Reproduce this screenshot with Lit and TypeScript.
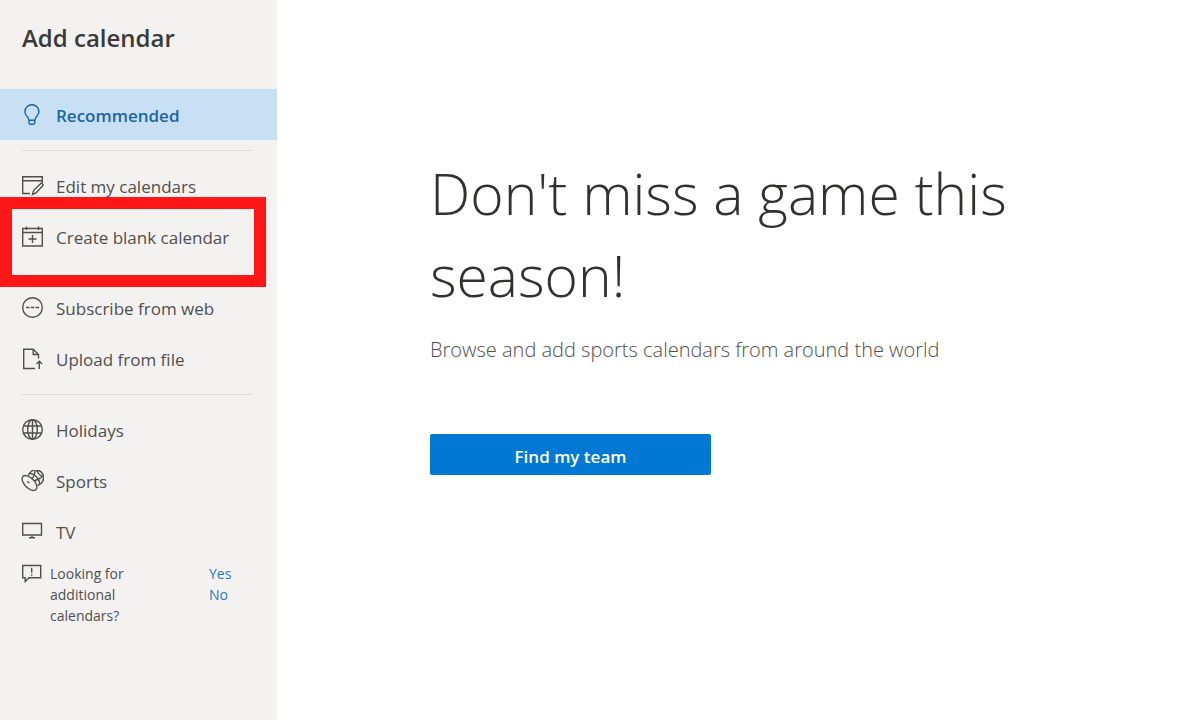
import { LitElement, html, css, svg, nothing } from "lit";
import { customElement, state } from "lit/decorators.js";

interface NavItem {
  id: string;
  label: string;
  highlighted?: boolean;
}

const icons: Record<string, unknown> = {
  recommended: svg`<path d="M8 16.200c0-2.900-4.100-4.300-4.100-8.500a7 7 0 0 1 14 0c0 4.200-4.100 5.600-4.100 8.500z M8 16.200v2.600a1.500 1.500 0 0 0 1.500 1.500h2.800a1.500 1.500 0 0 0 1.500-1.500v-2.600"/>`,
  edit: svg`<path d="M9 18.500H1.700V1.700h19.600v6M1.700 5.800h19.600M11.500 19.500l1.200-4.200 6.600-6.400a1.500 1.500 0 0 1 2.200 2.200l-6.500 6.800z"/>`,
  create: svg`<path d="M1.700 2.500h19.600v17.500H1.700zM1.700 6.500h19.600M5.500.5v3.500M17.500.5v3.500M11.500 9v8M7.500 13h8"/>`,
  subscribe: svg`<circle cx="11.500" cy="10.500" r="9.800"/><path d="M5 10.500h3.500M9.800 10.500h3.500M14.600 10.500h3.500"/>`,
  upload: svg`<path d="M14 20.500H2.700V1.200h9.500l5.300 5.300v4M12.200 1.200v5.300h5.300M18.300 21v-7.500M15.500 16l2.800-2.800 2.800 2.800"/>`,
  holidays: svg`<circle cx="11.500" cy="10.500" r="9.800"/><ellipse cx="11.500" cy="10.500" rx="4.800" ry="9.800"/><path d="M11.500.7v19.600M2.800 7h17.400M2.800 14h17.400"/>`,
  sports: svg`<path d="M7.300 5.600A7.800 7.800 0 1 1 16.500 15.300M9 3.300c4.500.7 9.300 5.200 9.800 10.500M14 .8c-.3 4.500-1.500 7-4 8M21.500 6.500c-3 2.500-5.500 3.500-8.500 4.500M15.500.8c1.500 3 3.500 4.500 6 5.500"/><ellipse cx="8.500" cy="13" rx="9.200" ry="5" transform="rotate(45 8.500 13)"/><path d="M6 11.500l2.500 1.500"/>`,
  tv: svg`<path d="M1.700 2.500h18.800v11.500H1.700zM11 14v2.500M8 16.700h6"/>`,
  feedback: svg`<path d="M1.700 2.500h18v12.300H8l-3.800 3.700v-3.700H1.700zM10.700 4.800v5M10.700 11.200v1.500"/>`,
};

const groups: NavItem[][] = [
  [{ id: "recommended", label: "Recommended" }],
  [
    { id: "edit", label: "Edit my calendars" },
    { id: "create", label: "Create blank calendar", highlighted: true },
  ],
  [
    { id: "subscribe", label: "Subscribe from web" },
    { id: "upload", label: "Upload from file" },
  ],
  [
    { id: "holidays", label: "Holidays" },
    { id: "sports", label: "Sports" },
    { id: "tv", label: "TV" },
  ],
];

const icon = (id: string) =>
  html`<svg class="icon" viewBox="0 0 23 22" aria-hidden="true">${icons[id]}</svg>`;

@customElement("app-root")
export class AppRoot extends LitElement {
  @state() private selected = "recommended";

  static styles = css`
    :host {
      display: flex;
      min-height: 100vh;
      background: #ffffff;
      color: #323130;
      font-family: "Open Sans", "Noto Sans", sans-serif;
    }
    .sidebar {
      flex: 0 0 277px;
      background: #f3f2f1;
    }
    .title {
      margin: 0;
      padding: 22px 22px 35px;
      font-size: 24px;
      line-height: 32px;
      font-weight: 600;
      color: #3b3a39;
    }
    .list {
      margin: 0;
      padding: 0;
      list-style: none;
    }
    .list + .list::before {
      content: "";
      display: block;
      height: 1px;
      margin: 10px 25px 9px 22px;
      background: #dddcdb;
    }
    .list.joined::before {
      background: none;
    }
    .entry {
      position: relative;
    }
    .item {
      display: flex;
      align-items: center;
      gap: 12px;
      width: 100%;
      height: 51px;
      padding: 0 21px;
      border: 0;
      background: none;
      color: #504f4e;
      font: inherit;
      font-size: 17px;
      line-height: 24px;
      text-align: left;
      white-space: nowrap;
      cursor: pointer;
    }
    .item .label {
      padding-top: 2px;
    }
    .item.selected {
      background: #c7e0f4;
      color: #1c65a3;
      font-weight: 600;
    }
    .marker {
      position: absolute;
      z-index: 1;
      top: -14px;
      left: 0;
      right: 11px;
      height: 90px;
      box-sizing: border-box;
      border: 12px solid #ff1616;
      pointer-events: none;
    }
    .icon {
      flex: none;
      width: 23px;
      height: 22px;
      fill: none;
      stroke: currentColor;
      stroke-width: 1.4;
    }
    .feedback {
      display: flex;
      padding: 6px 21px;
      font-size: 14px;
      line-height: 21px;
      color: #504f4e;
    }
    .question {
      flex: 0 1 108px;
      margin: 0 51px 0 6px;
    }
    .answers {
      display: flex;
      flex-direction: column;
    }
    .answers a {
      color: #2b78c5;
      text-decoration: none;
    }
    .main {
      flex: 1;
      min-width: 0;
      padding: 152px 153px;
    }
    .headline {
      margin: 0;
      font-size: 57px;
      line-height: 82px;
      font-weight: 300;
    }
    .sub {
      margin: 19px 0 69px;
      font-size: 20px;
      line-height: 30px;
      font-weight: 300;
      color: #504f4e;
    }
    .primary {
      width: 281px;
      height: 41px;
      padding: 3px 0 0;
      border: 0;
      border-radius: 2px;
      background: #0078d4;
      color: #ffffff;
      font: inherit;
      font-size: 17px;
      font-weight: 600;
      cursor: pointer;
    }
  `;

  private renderGroup(group: NavItem[], index: number) {
    const joined = index > 0 && groups[index - 1].some((i) => i.highlighted);
    return html`<ul class="list ${joined ? "joined" : ""}">
      ${group.map((i) => this.renderItem(i))}
    </ul>`;
  }

  private renderItem(item: NavItem) {
    const current = this.selected === item.id;
    return html`<li class="entry">
      <button
        class="item ${current ? "selected" : ""}"
        aria-current=${current ? "page" : nothing}
        @click=${() => (this.selected = item.id)}
      >
        ${icon(item.id)}<span class="label">${item.label}</span>
      </button>
      ${item.highlighted ? html`<div class="marker"></div>` : nothing}
    </li>`;
  }

  render() {
    return html`
      <nav class="sidebar">
        <h1 class="title">Add calendar</h1>
        ${groups.map((g, i) => this.renderGroup(g, i))}
        <div class="feedback">
          ${icon("feedback")}
          <p class="question">Looking for additional calendars?</p>
          <div class="answers"><a href="#yes">Yes</a><a href="#no">No</a></div>
        </div>
      </nav>
      <main class="main">
        <h2 class="headline">Don't miss a game this season!</h2>
        <p class="sub">Browse and add sports calendars from around the world</p>
        <button class="primary">Find my team</button>
      </main>
    `;
  }
}
